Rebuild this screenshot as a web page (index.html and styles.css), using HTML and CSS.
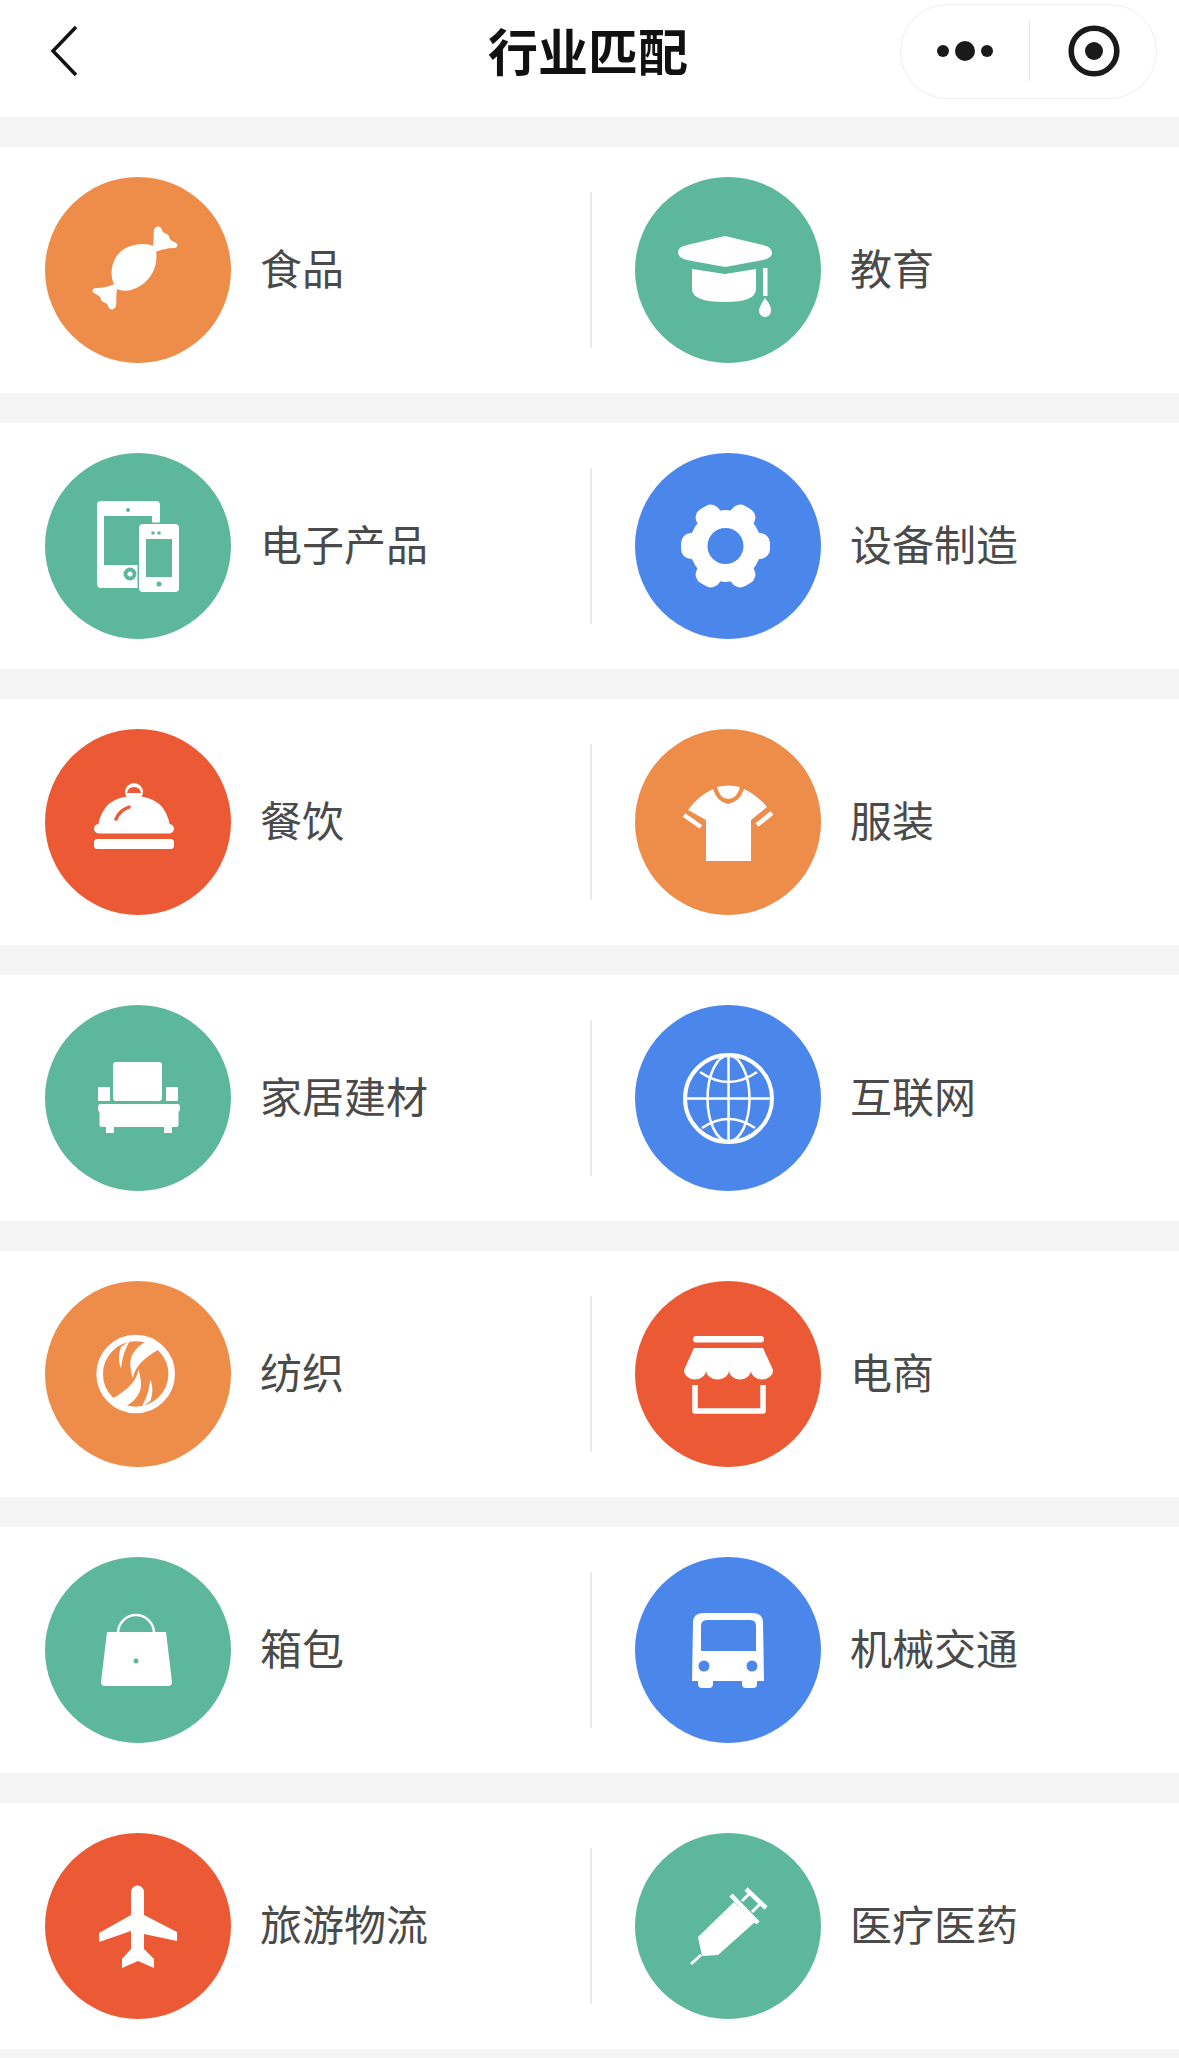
FILE: index.html
```html
<!DOCTYPE html>
<html lang="zh-CN">
<head>
  <meta charset="UTF-8">
  <title>行业匹配</title>
  <link rel="stylesheet" href="styles.css">
</head>
<body>
  <header class="nav">
    <div class="nav-left">
      <svg class="back" viewBox="0 0 30 52"><path d="M27 2 L4 26 L27 50"/></svg>
    </div>
    <h1>行业匹配</h1>
    <div class="nav-right">
      <div class="capsule">
        <svg class="more" viewBox="0 0 60 22"><circle cx="8" cy="11" r="6"/><circle cx="30" cy="11" r="10"/><circle cx="52" cy="11" r="6"/></svg>
        <span class="capsule-line"></span>
        <svg class="target" viewBox="0 0 52 52"><circle class="ring" cx="26" cy="26" r="22.800"/><circle cx="26" cy="26" r="9"/></svg>
      </div>
    </div>
  </header>

  <main class="list">
    <section class="row">
      <a class="cell">
        <span class="badge orange">
          <svg viewBox="0 0 186 186">
            <path d="M72 112 C62 100 66 77 83 70 C93 66 104 66 110 70 C114 82 110 100 95 109 C87 114 78 115 72 112Z"/>
            <path id="wing" d="M106 74 C110 68 108 58 109 53 C111 48 116 49 117 53 C118 57 122 56 124 59 C124 63 128 64 131 66 C134 68 132 71 129 71 C122 71 114 73 108 76Z"/>
            <use href="#wing" transform="rotate(180 90 91)"/>
          </svg>
        </span>
        <span class="name">食品</span>
      </a>
      <span class="sep"></span>
      <a class="cell">
        <span class="badge green">
          <svg viewBox="0 0 186 186">
            <path d="M90 59 L128 68 Q137 70 137 76 Q137 81 128 83 L90 90 L52 83 Q43 81 43 75 Q43 70 52 68Z"/>
            <path d="M57 92 L90 97 L121 92 V112 Q121 125 90 125 Q57 125 57 112Z"/>
            <rect x="128" y="91" width="4.500" height="28"/>
            <path d="M130 121 Q137 130 136 134 A6 6 0 0 1 124 134 Q124 130 130 121Z"/>
          </svg>
        </span>
        <span class="name">教育</span>
      </a>
    </section>

    <section class="row">
      <a class="cell">
        <span class="badge green">
          <svg viewBox="0 0 186 186">
            <rect x="52" y="48" width="63" height="87" rx="4"/>
            <rect class="cut" x="59" y="63" width="48" height="49"/>
            <circle class="cut" cx="83" cy="57" r="2"/>
            <circle class="cut-ring" cx="85" cy="121" r="4.500"/>
            <rect class="phone" x="94" y="71" width="40" height="68" rx="4"/>
            <rect class="cut" x="101" y="86" width="26" height="38"/>
            <circle class="cut" cx="108" cy="80" r="1.800"/>
            <circle class="cut" cx="114" cy="80" r="1.800"/>
            <circle class="cut" cx="114" cy="131" r="2.500"/>
          </svg>
        </span>
        <span class="name">电子产品</span>
      </a>
      <span class="sep"></span>
      <a class="cell">
        <span class="badge blue">
          <svg viewBox="0 0 186 186">
            <circle cx="90.500" cy="93" r="36"/>
            <rect id="lobe" x="46" y="80" width="89" height="26" rx="10"/>
            <use href="#lobe" transform="rotate(60 90.500 93)"/>
            <use href="#lobe" transform="rotate(120 90.500 93)"/>
            <circle class="cut" cx="90.500" cy="93" r="18"/>
          </svg>
        </span>
        <span class="name">设备制造</span>
      </a>
    </section>

    <section class="row">
      <a class="cell">
        <span class="badge red">
          <svg viewBox="0 0 186 186">
            <circle cx="89" cy="63" r="9"/>
            <path class="cut" d="M82 64 Q83 58 89 58 Q95 58 96 64Z"/>
            <path d="M53 97 Q58 67 89 67 Q120 67 125 97Z"/>
            <rect x="49" y="95" width="80" height="9.500" rx="4.700"/>
            <rect x="49" y="110" width="80" height="10" rx="3.500"/>
            <path class="line-cut" d="M71 90 Q74 82 84 78"/>
          </svg>
        </span>
        <span class="name">餐饮</span>
      </a>
      <span class="sep"></span>
      <a class="cell">
        <span class="badge orange">
          <svg viewBox="0 0 186 186">
            <path d="M78 60 Q82 73 93 75 Q105 73 109 60 Q122 66 132 78 L116 91 V132 H71 V91 L53 81 Q63 67 78 60Z"/>
            <path d="M82 58 Q93 55 105 58 Q102 70 93 70 Q85 70 82 58Z"/>
            <path class="line" d="M49 86 L66 98"/>
            <path class="line" d="M137 84 L122 96"/>
          </svg>
        </span>
        <span class="name">服装</span>
      </a>
    </section>

    <section class="row">
      <a class="cell">
        <span class="badge green">
          <svg viewBox="0 0 186 186">
            <rect x="68" y="57" width="49" height="39" rx="3"/>
            <rect x="53" y="82" width="12" height="14" rx="1"/>
            <rect x="121" y="82" width="12" height="14" rx="1"/>
            <rect x="53" y="99" width="82" height="8" rx="3"/>
            <rect x="54.500" y="104" width="79" height="18" rx="2"/>
            <rect x="61" y="120" width="8" height="8"/>
            <rect x="119" y="120" width="8" height="8"/>
          </svg>
        </span>
        <span class="name">家居建材</span>
      </a>
      <span class="sep"></span>
      <a class="cell">
        <span class="badge blue">
          <svg viewBox="0 0 186 186">
            <g class="globe">
              <circle class="globe-edge" cx="93.500" cy="93.500" r="43.500"/>
              <ellipse cx="93.500" cy="93.500" rx="21" ry="43"/>
              <path d="M93.500 50 V137"/>
              <path d="M50 93.500 H137"/>
              <path d="M65 67 Q93.500 87 122 67"/>
              <path d="M67 123 Q93.500 105 120 123"/>
            </g>
          </svg>
        </span>
        <span class="name">互联网</span>
      </a>
    </section>

    <section class="row">
      <a class="cell">
        <span class="badge orange">
          <svg viewBox="0 0 186 186">
            <g transform="translate(40 44) scale(.3333)">
              <circle class="swirl-ring" cx="152" cy="147" r="108"/>
              <g id="swirl">
                <path d="M228 70 L198 42 C162 58 134 84 136 118 C137 135 139 148 144 160 C148 130 172 100 228 70Z"/>
                <path d="M108 66 L136 46 C119 72 112 100 108 130 C100 110 100 88 108 66Z"/>
              </g>
              <use href="#swirl" transform="rotate(180 152 147)"/>
            </g>
          </svg>
        </span>
        <span class="name">纺织</span>
      </a>
      <span class="sep"></span>
      <a class="cell">
        <span class="badge red">
          <svg viewBox="0 0 186 186">
            <rect x="58" y="55" width="71" height="6.500" rx="3"/>
            <path d="M59 67 H128 L138 89 A11 9.500 0 0 1 116 89 A11 9.500 0 0 1 94 89 A11.500 9.500 0 0 1 71 89 A11 9.500 0 0 1 49 89Z"/>
            <path class="box" d="M60 104 V130 H128 V104"/>
          </svg>
        </span>
        <span class="name">电商</span>
      </a>
    </section>

    <section class="row">
      <a class="cell">
        <span class="badge green">
          <svg viewBox="0 0 186 186">
            <path class="handle" d="M73 76 A18 18 0 0 1 109 76"/>
            <path d="M62 75 H121 L127 125 Q127 129 123 129 H60 Q56 129 56 125Z"/>
            <circle class="cut" cx="91" cy="104" r="2.500"/>
          </svg>
        </span>
        <span class="name">箱包</span>
      </a>
      <span class="sep"></span>
      <a class="cell">
        <span class="badge blue">
          <svg viewBox="0 0 186 186">
            <path d="M68 56 H118 Q128 56 128 66 L129 124 H122 V127 Q122 131 118 131 H111 Q107 131 107 127 V124 H78 V127 Q78 131 74 131 H67 Q63 131 63 127 V124 H57 L58 66 Q58 56 68 56Z"/>
            <path class="cut" d="M72 63 H115 Q121 63 121 69 V94 H66 V69 Q66 63 72 63Z"/>
            <circle class="cut" cx="69" cy="109" r="5.500"/>
            <circle class="cut" cx="117" cy="109" r="5.500"/>
          </svg>
        </span>
        <span class="name">机械交通</span>
      </a>
    </section>

    <section class="row">
      <a class="cell">
        <span class="badge red">
          <svg viewBox="0 0 186 186">
            <path d="M86 59 A6.500 6.500 0 0 1 99 59 V82 L132 99 V108 L99 101 V116 L109 126 V135 L93 128 L77 135 V126 L86 116 V98 L54 109 V100 L86 82Z"/>
          </svg>
        </span>
        <span class="name">旅游物流</span>
      </a>
      <span class="sep"></span>
      <a class="cell">
        <span class="badge green">
          <svg viewBox="0 0 186 186">
            <path d="M99 69 L120 89 L83 122 L67 123 L63 104Z"/>
            <path class="line" d="M96 62 L123 90"/>
            <path class="line" d="M111 56 L131 75"/>
            <path class="thin" d="M107 68 L115 60"/>
            <path class="thin" d="M117 79 L125 71"/>
            <path class="thin" d="M66 122 L56 131"/>
          </svg>
        </span>
        <span class="name">医疗医药</span>
      </a>
    </section>
  </main>
</body>
</html>
```

FILE: styles.css
```css
body {
  margin: 0;
  background: #f5f5f5;
  font-family: "Noto Sans CJK SC", "Noto Sans", sans-serif;
}
.nav {
  display: grid;
  grid-template-columns: 1fr auto 1fr;
  align-items: center;
  height: 117px;
  padding-bottom: 15px;
  box-sizing: border-box;
  background: #fff;
}
.nav h1 {
  margin: 0;
  padding: 0 3px 5px 0;
  font-size: 50px;
  font-weight: 700;
  line-height: 60px;
  color: #111;
}
.nav-left {
  padding-left: 49px;
}
.back {
  display: block;
  width: 30px;
  height: 52px;
  fill: none;
  stroke: #111;
  stroke-width: 3.500;
}
.nav-right {
  display: flex;
  justify-content: flex-end;
  padding-right: 22px;
}
.capsule {
  display: flex;
  align-items: center;
  width: 257px;
  height: 95px;
  box-sizing: border-box;
  padding-left: 33.500px;
  border: 1.500px solid #eee;
  border-radius: 48px;
}
.more {
  width: 60px;
  height: 22px;
  fill: #1a1a1a;
}
.capsule-line {
  width: 1px;
  height: 60px;
  margin: 0 38px 0 34px;
  background: #e4e4e4;
}
.target {
  width: 52px;
  height: 52px;
  fill: #1a1a1a;
}
.target .ring {
  fill: none;
  stroke: #1a1a1a;
  stroke-width: 5.600;
}
.list {
  display: flex;
  flex-direction: column;
  gap: 30px;
  padding: 30px 0 9px;
}
.row {
  display: flex;
  align-items: center;
  height: 246px;
  background: #fff;
}
.cell {
  display: flex;
  align-items: center;
  gap: 29px;
  width: 590px;
  box-sizing: border-box;
  padding-left: 45px;
}
.sep + .cell {
  width: auto;
  padding-left: 43px;
}
.sep {
  width: 2px;
  height: 156px;
  background: #e9e9e9;
}
.badge {
  display: block;
  width: 186px;
  height: 186px;
  border-radius: 50%;
}
.badge svg {
  display: block;
  width: 186px;
  height: 186px;
  fill: #fff;
}
.orange { background: #ee8c49; --tone: #ee8c49; }
.green { background: #5db79b; --tone: #5db79b; }
.blue { background: #4b86ea; --tone: #4b86ea; }
.red { background: #eb5a35; --tone: #eb5a35; }
.name {
  padding-bottom: 6px;
  font-size: 42px;
  line-height: 60px;
  color: #4a4a4a;
}
.badge .cut { fill: var(--tone); }
.badge .cut-ring {
  fill: #fff;
  stroke: var(--tone);
  stroke-width: 4;
}
.badge .phone {
  stroke: var(--tone);
  stroke-width: 3;
  paint-order: stroke;
}
.badge .line-cut {
  fill: none;
  stroke: var(--tone);
  stroke-width: 3.500;
  stroke-linecap: round;
}
.badge .line {
  fill: none;
  stroke: #fff;
  stroke-width: 4.500;
}
.badge .thin {
  fill: none;
  stroke: #fff;
  stroke-width: 3;
}
.badge .box {
  fill: none;
  stroke: #fff;
  stroke-width: 5.500;
  stroke-linejoin: round;
}
.badge .handle {
  fill: none;
  stroke: #fff;
  stroke-width: 2.500;
}
.badge .swirl-ring {
  fill: none;
  stroke: #fff;
  stroke-width: 20;
}
.globe {
  fill: none;
  stroke: #fff;
  stroke-width: 2.500;
}
.badge .globe * { fill: none; }
.globe-edge { stroke-width: 4; }
```
